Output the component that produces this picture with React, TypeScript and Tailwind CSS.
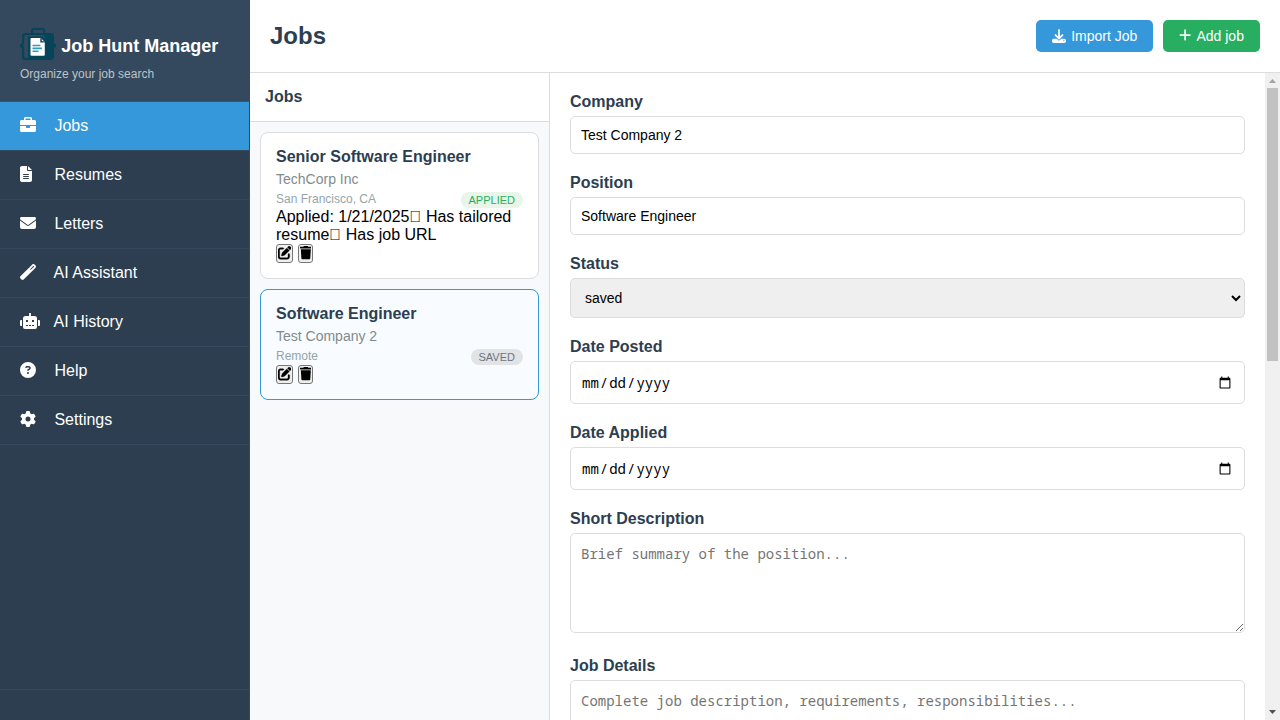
import type { ComponentType, ReactNode } from "react";
import { FaCircleQuestion, FaDownload, FaEnvelope, FaFileLines, FaGear, FaPenToSquare, FaWandMagic } from "react-icons/fa6";

type Icon = ComponentType<{ className?: string }>;

const BriefcaseIcon: Icon = ({ className }) => (
  <svg viewBox="0 0 512 512" fill="currentColor" className={className}>
    <path d="M320 336c0 8.844-7.156 16-16 16h-96C199.200 352 192 344.800 192 336V288H0v144C0 457.600 22.410 480 48 480h416c25.590 0 48-22.410 48-48V288h-192V336zM464 96H384V48C384 22.410 361.600 0 336 0h-160C150.400 0 128 22.410 128 48V96H48C22.410 96 0 118.400 0 144V256h512V144C512 118.400 489.600 96 464 96zM336 96h-160V48h160V96z" />
  </svg>
);

const RobotIcon: Icon = ({ className }) => (
  <svg viewBox="0 0 20 16" fill="currentColor" fillRule="evenodd" className={className}>
    <path d="M9.500 3V.5a.5.5 0 0 1 1 0V3H14.500A2.500 2.500 0 0 1 17 5.500V14a2 2 0 0 1-2 2H5a2 2 0 0 1-2-2V5.500A2.500 2.500 0 0 1 5.500 3zM6 7v2h2V7zM12 7v2h2V7zM6 12v1h2v-1zM9 12v1h2v-1zM12 12v1h2v-1z" />
    <path d="M9.200 0h1.600v3.500H9.200zM1 7h1v6H1a1 1 0 0 1-1-1V8a1 1 0 0 1 1-1zM18 7h1a1 1 0 0 1 1 1v4a1 1 0 0 1-1 1h-1z" fillRule="nonzero" />
  </svg>
);

const TrashIcon: Icon = ({ className }) => (
  <svg viewBox="0 0 448 512" fill="currentColor" className={className}>
    <path d="M53.210 467c1.562 24.840 23.020 45 47.900 45h245.800c24.880 0 46.330-20.160 47.900-45L416 128H32L53.210 467zM432 32H320l-11.580-23.160c-2.709-5.420-8.250-8.844-14.310-8.844H153.900c-6.061 0-11.600 3.424-14.310 8.844L128 32H16c-8.836 0-16 7.162-16 16V80c0 8.836 7.164 16 16 16h416c8.838 0 16-7.164 16-16V48C448 39.160 440.800 32 432 32z" />
  </svg>
);

const PlusIcon: Icon = ({ className }) => (
  <svg viewBox="0 0 448 512" fill="currentColor" className={className}>
    <path d="M432 256c0 17.690-14.330 32-32 32H256v144c0 17.690-14.330 32-32 32s-32-14.310-32-32V288H48c-17.670 0-32-14.310-32-32s14.330-32 32-32h144V80c0-17.690 14.330-32 32-32s32 14.310 32 32v144h144C417.700 224 432 238.300 432 256z" />
  </svg>
);

const navItems: { label: string; icon: Icon; size: string }[] = [
  { label: "Jobs", icon: BriefcaseIcon, size: "h-4 w-4" },
  { label: "Resumes", icon: FaFileLines, size: "h-4 w-3" },
  { label: "Letters", icon: FaEnvelope, size: "h-4 w-4" },
  { label: "AI Assistant", icon: FaWandMagic, size: "h-4 w-4" },
  { label: "AI History", icon: RobotIcon, size: "h-4 w-5" },
  { label: "Help", icon: FaCircleQuestion, size: "h-4 w-4" },
  { label: "Settings", icon: FaGear, size: "h-4 w-4" },
];

function Logo() {
  return (
    <svg viewBox="0 0 36 32" className="h-8 w-9 shrink-0">
      <path d="M12 5.500V2.600A1.600 1.600 0 0 1 13.600 1h9a1.600 1.600 0 0 1 1.600 1.600v2.900" fill="none" stroke="#064559" strokeWidth="2" />
      <path
        d="M5 5h26a3 3 0 0 1 3 3v6.500c0 .8.400 1.300 2 2v2.500c-1.600.7-2 1.200-2 2V29a3 3 0 0 1-3 3H5a3 3 0 0 1-3-3v-8c0-.8-.4-1.300-2-2v-2.500c1.600-.7 2-1.200 2-2V8a3 3 0 0 1 3-3z"
        fill="#064559"
      />
      <path
        d="M6 7h17l3 3H9.300v20H6a1.800 1.800 0 0 1-1.800-1.800v-8c0-1.200-.4-2-1.500-2.700 1.100-.7 1.500-1.500 1.500-2.700V8.800A1.800 1.800 0 0 1 6 7z"
        fill="#34495e"
      />
      <path d="M8 8.500h14.500l3.500 3.500v17.500H8z" fill="#064559" />
      <path d="M11.500 10h9.200l4.100 4.200v12.600a1 1 0 0 1-1 1H11.500a1 1 0 0 1-1-1V11a1 1 0 0 1 1-1z" fill="#fff" />
      <path d="M20.300 9.800v4.700h4.700z" fill="#064559" />
      <path d="M21.800 11.300v2h2z" fill="#fff" />
      <path d="M12.500 17.500h8M12.500 20.400h9.500M12.500 23.200h6" stroke="#2f9fb5" strokeWidth="1.600" fill="none" />
    </svg>
  );
}

function Sidebar() {
  return (
    <aside className="flex w-[250px] shrink-0 flex-col border-r border-[#34495e] bg-[#2c3e50] text-white">
      <div className="h-[102px] border-b border-[#3d566e] bg-[#34495e] px-5 pt-7">
        <div className="flex items-center gap-[5.200px]">
          <Logo />
          <h1 className="pt-1 text-[18px] leading-[21px] font-bold">Job Hunt Manager</h1>
        </div>
        <p className="mt-[7px] text-[12px] leading-[14px] text-[#bdc3c7]">Organize your job search</p>
      </div>
      <nav className="flex flex-1 flex-col">
        {navItems.map(({ label, icon: NavIcon, size }, i) => (
          <button
            key={label}
            className={`flex h-[49px] items-center border-b border-[#34495e] px-5 text-left text-[16px] ${i === 0 ? "bg-[#3498db]" : ""}`}
          >
            <span className="mb-[2px] flex w-5 shrink-0">
              <NavIcon className={size} />
            </span>
            <span className="ml-[10px] leading-[18px] whitespace-pre">{` ${label}`}</span>
          </button>
        ))}
      </nav>
      <div className="h-[31px] border-t border-[#34495e]" />
    </aside>
  );
}

function IconButton({ label, children }: { label: string; children: ReactNode }) {
  return (
    <button
      aria-label={label}
      className="flex h-[19px] items-center justify-center rounded-[3px] border border-[#767676] bg-[#efefef] px-px pb-px text-black"
    >
      {children}
    </button>
  );
}

type Job = {
  title: string;
  company: string;
  location: string;
  status: string;
  statusClass: string;
  notes?: string;
  selected?: boolean;
};

const jobs: Job[] = [
  {
    title: "Senior Software Engineer",
    company: "TechCorp Inc",
    location: "San Francisco, CA",
    status: "APPLIED",
    statusClass: "bg-[#e8f5e8] text-[#27ae60]",
    notes: "Applied: 1/21/2025\uF15C Has tailored resume\uF0C1 Has job URL",
  },
  {
    title: "Software Engineer",
    company: "Test Company 2",
    location: "Remote",
    status: "SAVED",
    statusClass: "bg-[#e2e3e5] text-[#6c757d]",
    selected: true,
  },
];

function JobCard({ job }: { job: Job }) {
  return (
    <article
      className={`rounded-lg border p-[15px] ${job.selected ? "border-[#3498db] bg-[#f8fbff]" : "border-[#ddd] bg-white"}`}
    >
      <h3 className="mb-[5px] text-[16px] leading-[18px] font-bold text-[#2c3e50]">{job.title}</h3>
      <p className="mb-[5px] text-[14px] leading-4 text-[#7f8c8d]">{job.company}</p>
      <div className="flex h-4 justify-between">
        <span className="text-[12px] leading-[14px] text-[#95a5a6]">{job.location}</span>
        <span className={`rounded-xl px-2 pt-[2px] text-[11px] leading-[13px] ${job.statusClass}`}>{job.status}</span>
      </div>
      {job.notes && <p className="text-[16px] leading-[18px] text-black">{job.notes}</p>}
      <div className="flex gap-[4.500px]">
        <IconButton label="Edit">
          <FaPenToSquare className="h-[13.330px] w-[13.330px] stroke-current stroke-[12]" />
        </IconButton>
        <IconButton label="Delete">
          <TrashIcon className="h-[13.330px] w-[11.660px]" />
        </IconButton>
      </div>
    </article>
  );
}

function Field({ label, children }: { label: string; children: ReactNode }) {
  return (
    <label className="mb-5 flex shrink-0 flex-col">
      <span className="mb-[5px] text-[16px] leading-[18px] font-bold text-[#2c3e50]">{label}</span>
      {children}
    </label>
  );
}

const dateClass =
  "h-[43px] w-full rounded-[5px] border border-[#ddd] bg-white px-[10px] font-['Noto_Sans_Mono',monospace] text-[14px] text-black";
const textClass = "h-[38px] w-full rounded-[5px] border border-[#ddd] bg-white px-[10px] text-[14px] text-black";
const areaClass =
  "h-[100px] w-full resize-y rounded-[5px] border border-[#ddd] bg-white p-[10px] font-['Noto_Sans_Mono',monospace] text-[14px] leading-[19px] text-black placeholder:text-[#757575]";

function JobForm() {
  return (
    <form className="flex min-w-0 flex-1 flex-col overflow-hidden p-5">
      <Field label="Company">
        <input className={textClass} defaultValue="Test Company 2" />
      </Field>
      <Field label="Position">
        <input className={textClass} defaultValue="Software Engineer" />
      </Field>
      <Field label="Status">
        <select
          className="h-10 w-full rounded-[5px] border border-[#ddd] bg-[#efefef] p-[10px] text-[14px] text-black"
          defaultValue="saved"
        >
          <option>saved</option>
          <option>applied</option>
        </select>
      </Field>
      <Field label="Date Posted">
        <input type="date" className={dateClass} />
      </Field>
      <Field label="Date Applied">
        <input type="date" className={dateClass} />
      </Field>
      <Field label="Short Description">
        <textarea className={`${areaClass} mb-1`} placeholder="Brief summary of the position..." />
      </Field>
      <Field label="Job Details">
        <textarea className={areaClass} placeholder="Complete job description, requirements, responsibilities..." />
      </Field>
    </form>
  );
}

function Scrollbar() {
  return (
    <div className="flex w-[15px] shrink-0 flex-col items-center justify-between bg-[#f0f0f0]">
      <div className="flex flex-col items-center">
        <svg viewBox="0 0 15 15" className="h-[15px] w-[15px]">
          <path d="M4 10h7L7.500 6z" fill="#a3a3a3" />
        </svg>
        <div className="h-[273px] w-[11px] bg-[#c1c1c1]" />
      </div>
      <svg viewBox="0 0 15 15" className="h-[15px] w-[15px]">
        <path d="M4 5h7L7.500 9z" fill="#505050" />
      </svg>
    </div>
  );
}

export default function App() {
  return (
    <div className="flex h-screen overflow-hidden bg-white font-['Liberation_Sans',Arial,sans-serif]">
      <Sidebar />
      <main className="flex min-w-0 flex-1 flex-col">
        <header className="flex h-[73px] shrink-0 items-center justify-between border-b border-[#ddd] px-5">
          <h2 className="text-[24px] leading-7 font-bold text-[#2c3e50]">Jobs</h2>
          <div className="flex gap-[10px]">
            <button className="flex h-8 w-[117px] items-center gap-[5.200px] rounded-[5px] bg-[#3498db] pl-4 text-[14px] whitespace-nowrap text-white">
              <FaDownload className="h-[14px] w-[14px]" />
              Import Job
            </button>
            <button className="flex h-8 w-[97px] items-center gap-[5.200px] rounded-[5px] bg-[#27ae60] pl-4 text-[14px] whitespace-nowrap text-white">
              <PlusIcon className="mb-[2px] h-[14px] w-[12.250px]" />
              Add job
            </button>
          </div>
        </header>
        <div className="flex min-h-0 flex-1">
          <section className="w-[300px] shrink-0 border-r border-[#ddd] bg-[#f8f9fa]">
            <h3 className="h-[49px] border-b border-[#ddd] bg-white px-[15px] pt-[15px] text-[16px] leading-[18px] font-bold text-[#2c3e50]">
              Jobs
            </h3>
            <div className="flex flex-col gap-[10px] p-[10px]">
              {jobs.map((job) => (
                <JobCard key={job.title} job={job} />
              ))}
            </div>
          </section>
          <JobForm />
          <Scrollbar />
        </div>
      </main>
    </div>
  );
}
